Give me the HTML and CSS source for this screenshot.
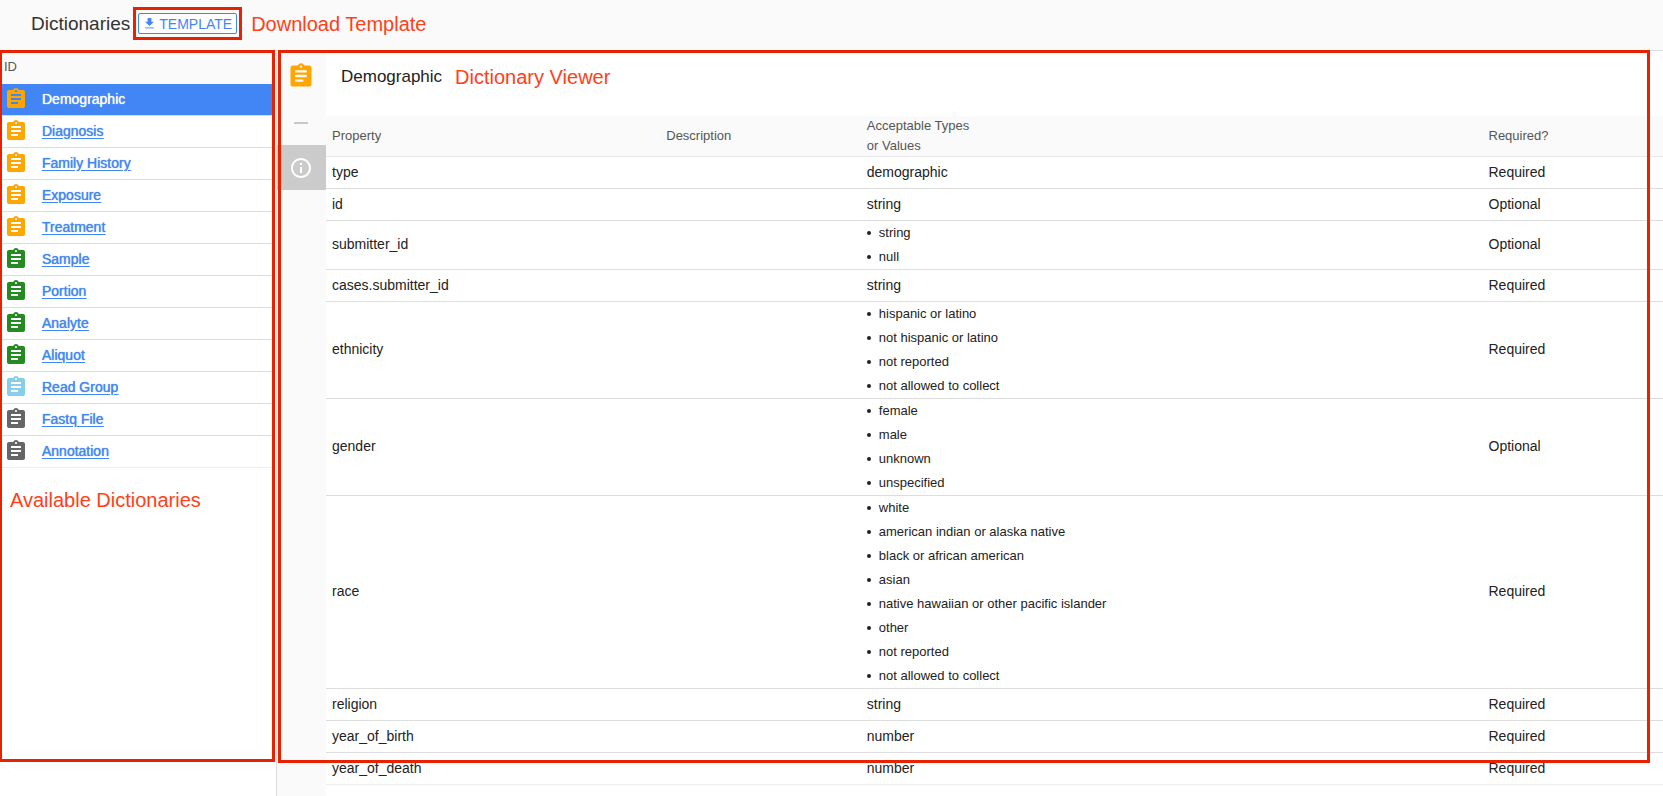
FILE: index.html
```html
<!DOCTYPE html>
<html lang="en">
<head>
<meta charset="utf-8">
<title>Dictionaries</title>
<link rel="stylesheet" href="styles.css">
</head>
<body>
<svg class="sprite" aria-hidden="true">
  <symbol id="clipboard" viewBox="0 0 24 24"><path d="M19 3h-4.18C14.4 1.84 13.3 1 12 1c-1.3 0-2.4.84-2.82 2H5c-1.1 0-2 .9-2 2v14c0 1.1.9 2 2 2h14c1.1 0 2-.9 2-2V5c0-1.1-.9-2-2-2zm-7 0c.55 0 1 .45 1 1s-.45 1-1 1-1-.45-1-1 .45-1 1-1zm2 14H7v-2h7v2zm3-4H7v-2h10v2zm0-4H7V7h10v2z"/></symbol>
  <symbol id="download" viewBox="0 0 24 24"><path d="M19 9h-4V3H9v6H5l7 7 7-7z"/><path opacity=".7" d="M5 18v2h14v-2H5z"/></symbol>
  <symbol id="info" viewBox="0 0 24 24"><path d="M11 17h2v-6h-2v6zm1-15C6.48 2 2 6.48 2 12s4.48 10 10 10 10-4.48 10-10S17.52 2 12 2zm0 18c-4.41 0-8-3.59-8-8s3.59-8 8-8 8 3.59 8 8-3.59 8-8 8zM11 9h2V7h-2v2z"/></symbol>
</svg>

<header class="topbar">
  <h1 class="topbar-title">Dictionaries</h1>
  <div class="callout-button">
    <button class="template-button" type="button"><svg class="icon-small"><use href="#download"/></svg>TEMPLATE</button>
  </div>
  <span class="note">Download Template</span>
</header>

<div class="workspace">
  <aside class="sidebar">
    <table class="dictionary-list">
      <thead><tr><th colspan="2">ID</th></tr></thead>
      <tbody>
        <tr class="selected"><td class="icon-cell"><svg class="icon clinical"><use href="#clipboard"/></svg></td><td><a href="#demographic">Demographic</a></td></tr>
        <tr><td class="icon-cell"><svg class="icon clinical"><use href="#clipboard"/></svg></td><td><a href="#diagnosis">Diagnosis</a></td></tr>
        <tr><td class="icon-cell"><svg class="icon clinical"><use href="#clipboard"/></svg></td><td><a href="#family-history">Family History</a></td></tr>
        <tr><td class="icon-cell"><svg class="icon clinical"><use href="#clipboard"/></svg></td><td><a href="#exposure">Exposure</a></td></tr>
        <tr><td class="icon-cell"><svg class="icon clinical"><use href="#clipboard"/></svg></td><td><a href="#treatment">Treatment</a></td></tr>
        <tr><td class="icon-cell"><svg class="icon biospecimen"><use href="#clipboard"/></svg></td><td><a href="#sample">Sample</a></td></tr>
        <tr><td class="icon-cell"><svg class="icon biospecimen"><use href="#clipboard"/></svg></td><td><a href="#portion">Portion</a></td></tr>
        <tr><td class="icon-cell"><svg class="icon biospecimen"><use href="#clipboard"/></svg></td><td><a href="#analyte">Analyte</a></td></tr>
        <tr><td class="icon-cell"><svg class="icon biospecimen"><use href="#clipboard"/></svg></td><td><a href="#aliquot">Aliquot</a></td></tr>
        <tr><td class="icon-cell"><svg class="icon reads"><use href="#clipboard"/></svg></td><td><a href="#read-group">Read Group</a></td></tr>
        <tr><td class="icon-cell"><svg class="icon other"><use href="#clipboard"/></svg></td><td><a href="#fastq-file">Fastq File</a></td></tr>
        <tr><td class="icon-cell"><svg class="icon other"><use href="#clipboard"/></svg></td><td><a href="#annotation">Annotation</a></td></tr>
      </tbody>
    </table>
    <p class="note sidebar-note">Available Dictionaries</p>
    <div class="frame sidebar-frame"></div>
  </aside>

  <main class="viewer">
    <nav class="rail">
      <svg class="icon-large clinical"><use href="#clipboard"/></svg>
      <span class="rail-dash"></span>
      <button class="rail-info" type="button" aria-label="Information"><svg class="icon"><use href="#info"/></svg></button>
    </nav>
    <section class="detail">
      <div class="detail-head">
        <h2 class="detail-title">Demographic</h2>
        <span class="note">Dictionary Viewer</span>
      </div>
      <table class="properties">
        <colgroup><col class="col-property"><col class="col-description"><col class="col-types"><col></colgroup>
        <thead><tr><th>Property</th><th>Description</th><th>Acceptable Types<br>or Values</th><th>Required?</th></tr></thead>
        <tbody>
          <tr><td>type</td><td></td><td>demographic</td><td>Required</td></tr>
          <tr><td>id</td><td></td><td>string</td><td>Optional</td></tr>
          <tr><td>submitter_id</td><td></td><td class="values"><ul><li>string</li><li>null</li></ul></td><td>Optional</td></tr>
          <tr><td>cases.submitter_id</td><td></td><td>string</td><td>Required</td></tr>
          <tr><td>ethnicity</td><td></td><td class="values"><ul><li>hispanic or latino</li><li>not hispanic or latino</li><li>not reported</li><li>not allowed to collect</li></ul></td><td>Required</td></tr>
          <tr><td>gender</td><td></td><td class="values"><ul><li>female</li><li>male</li><li>unknown</li><li>unspecified</li></ul></td><td>Optional</td></tr>
          <tr><td>race</td><td></td><td class="values"><ul><li>white</li><li>american indian or alaska native</li><li>black or african american</li><li>asian</li><li>native hawaiian or other pacific islander</li><li>other</li><li>not reported</li><li>not allowed to collect</li></ul></td><td>Required</td></tr>
          <tr><td>religion</td><td></td><td>string</td><td>Required</td></tr>
          <tr><td>year_of_birth</td><td></td><td>number</td><td>Required</td></tr>
          <tr><td>year_of_death</td><td></td><td>number</td><td>Required</td></tr>
        </tbody>
      </table>
    </section>
    <div class="frame viewer-frame"></div>
  </main>
</div>
</body>
</html>
```
FILE: styles.css
```css
* { box-sizing: border-box; }

body {
  display: flex;
  flex-direction: column;
  min-height: 100vh;
  margin: 0;
  background: #fff;
  color: #222;
  font: 14px/20px "Liberation Sans", Arial, sans-serif;
}

h1, h2, p, ul { margin: 0; padding: 0; font-weight: normal; }
table { width: 100%; border-collapse: separate; border-spacing: 0; }
th { font-size: 13px; font-weight: normal; text-align: left; color: #555; background: #fafafa; }
button { font: inherit; cursor: pointer; }
svg { display: block; fill: currentColor; }

.sprite { display: none; }
.icon { width: 24px; height: 24px; }
.icon-small { width: 15px; height: 15px; }
.icon-large { width: 28px; height: 28px; }
.clinical { color: #ffa500; }
.biospecimen { color: #228b22; }
.reads { color: #87ceeb; }
.other { color: #666; }

.note { color: #ff4019; font-size: 20px; line-height: 24px; }
.frame { position: absolute; border: 3px solid #e62200; pointer-events: none; }

.topbar {
  display: flex;
  align-items: center;
  padding: 7px 31px 10px;
  background: #fafafa;
  border-bottom: 1px solid #ddd;
}
.topbar-title { font-size: 19px; line-height: 24px; color: #333; }
.callout-button { margin: 0 9px 0 3px; padding: 3px 2px; border: 3px solid #e62200; }
.template-button {
  display: flex;
  align-items: center;
  gap: 2px;
  height: 21px;
  padding: 0 4px 0 3px;
  border: 1px solid #4285f4;
  border-radius: 2px;
  background: #fff;
  color: #4285f4;
}

.workspace { display: flex; flex: 1; }
.sidebar { position: relative; flex: none; width: 277px; padding-right: 2px; border-right: 1px solid #ddd; }
.sidebar-frame { top: -1px; right: 1px; bottom: 34px; left: -1px; }
.sidebar-note { margin: 20px 10px 0; }

.dictionary-list th { padding: 6px 4px 7px; }
.dictionary-list td { padding: 0 0 2px; border-bottom: 1px solid #ddd; }
.dictionary-list tr:last-child td { border-bottom-color: #eee; }
.dictionary-list .icon-cell { width: 42px; padding: 3px 4px 4px; }
.dictionary-list a { color: #4285f4; text-shadow: 0 0 1px currentColor; text-underline-offset: 2px; }
.selected { background: #4285f4; }
.dictionary-list .selected a { color: #fff; text-decoration: none; }

.viewer { position: relative; display: flex; flex: 1; }
.viewer-frame { top: -1px; right: 13px; bottom: 33px; left: 1px; }

.rail {
  display: flex;
  flex-direction: column;
  align-items: center;
  flex: none;
  width: 49px;
  padding-top: 11px;
  background: #fafafa;
}
.rail .icon-large, .rail-dash { margin-right: 2px; }
.rail-dash { width: 14px; height: 2px; margin-top: 32px; margin-bottom: 21px; background: #c8c8c8; }
.rail-info {
  display: grid;
  place-items: center;
  width: 100%;
  height: 45px;
  padding: 0 2px 0 0;
  border: 0;
  background: #cbcbcb;
  color: #fff;
}

.detail { flex: 1; }
.detail-head { display: flex; align-items: center; gap: 13px; padding: 14px 15px 27px; }
.detail-title { font-size: 17px; line-height: 24px; }

.properties { table-layout: fixed; }
.properties th { height: 41px; padding: 0 6px; border-bottom: 1px solid #e8e8e8; }
.properties td { height: 32px; padding: 0 6px 2px; border-bottom: 1px solid #ddd; }
.properties .values { padding-bottom: 0; }
.properties tr:last-child td { border-bottom-color: #eee; }
.col-property { width: 25%; }
.col-description { width: 15%; }
.col-types { width: 46.5%; }
.properties ul { padding-left: 12px; font-size: 13px; line-height: 24px; list-style: none; }
.properties li { position: relative; }
.properties li::before {
  content: "";
  position: absolute;
  top: 10px;
  left: -12px;
  width: 4px;
  height: 4px;
  border-radius: 50%;
  background: #222;
}
```
